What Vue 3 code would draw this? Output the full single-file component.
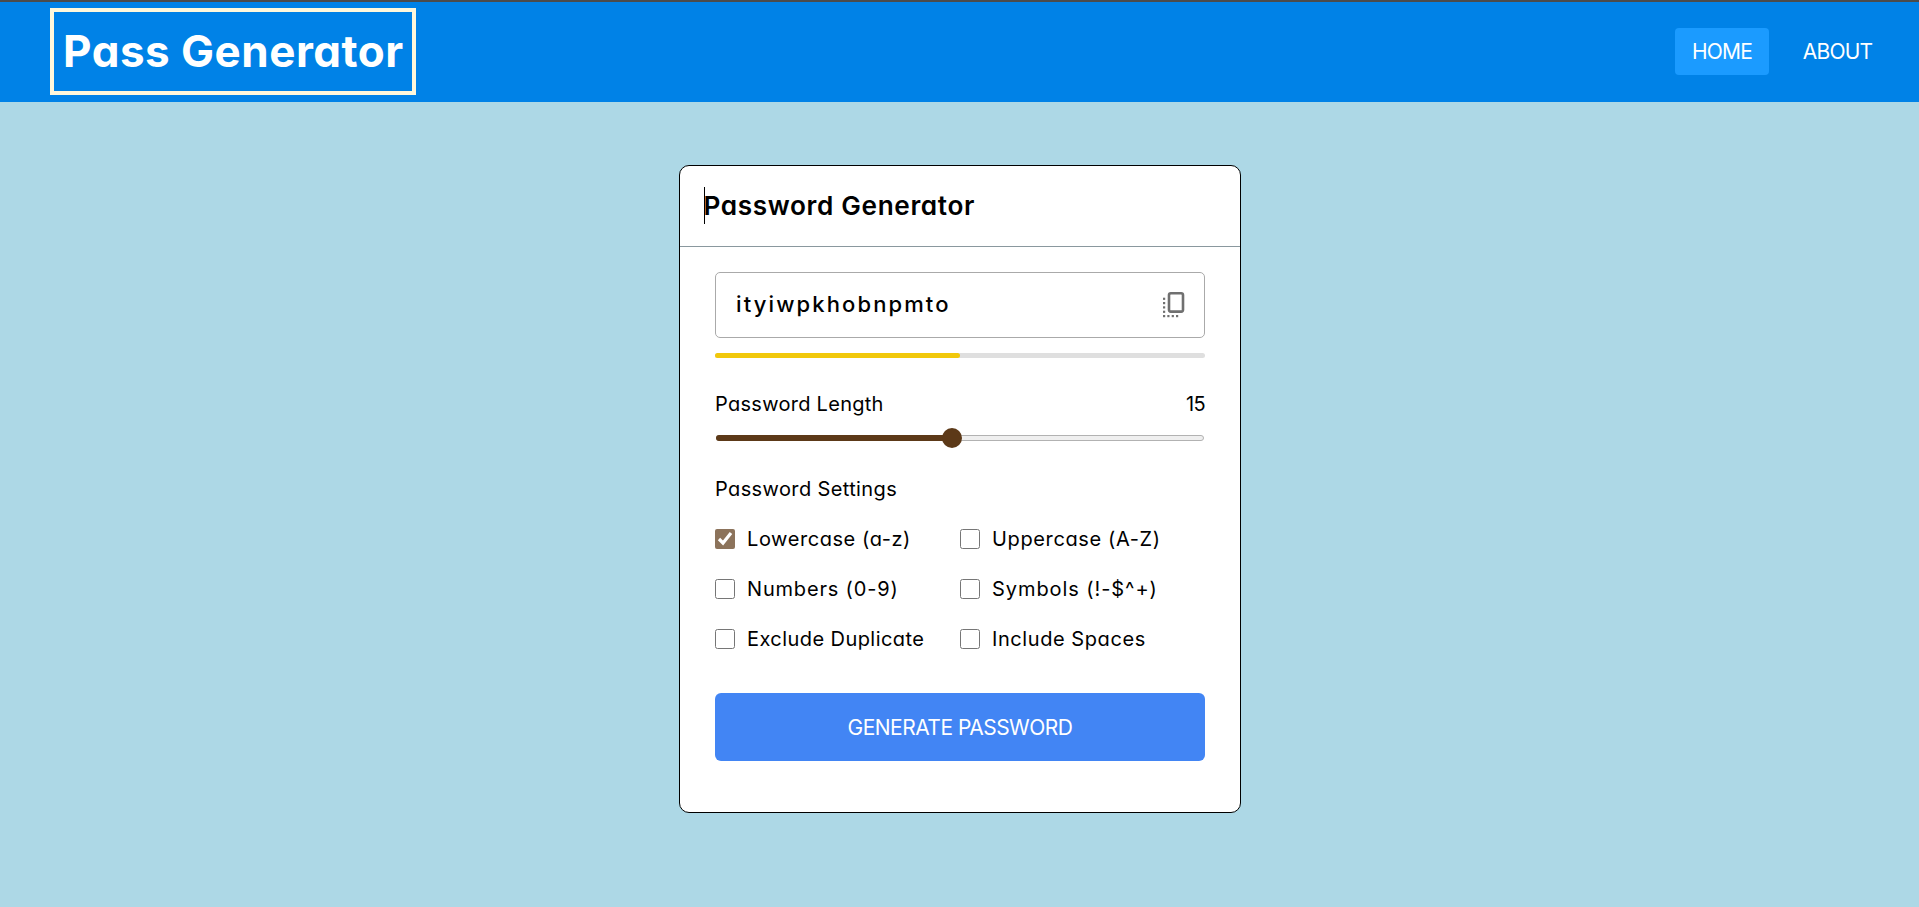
<script setup>
import { ref } from 'vue'

const password = ref('ityiwpkhobnpmto')
const length = ref(15)
const options = ref([
  { id: 'lowercase', label: 'Lowercase (a-z)', checked: true },
  { id: 'uppercase', label: 'Uppercase (A-Z)', checked: false },
  { id: 'numbers', label: 'Numbers (0-9)', checked: false },
  { id: 'symbols', label: 'Symbols (!-$^+)', checked: false },
  { id: 'duplicate', label: 'Exclude Duplicate', checked: false },
  { id: 'spaces', label: 'Include Spaces', checked: false },
])
</script>

<template>
  <div class="page">
    <header class="navbar">
      <div class="logo"><span>Pass Generator</span></div>
      <nav class="links">
        <a class="link home active">HOME</a>
        <a class="link about">ABOUT</a>
      </nav>
    </header>

    <main class="card">
      <div class="card-head">
        <i class="caret"></i>
        <h2>Password Generator</h2>
      </div>
      <div class="card-body">
        <div class="password-box">
          <span class="password">{{ password }}</span>
          <svg class="copy" viewBox="0 0 24 28" width="24" height="28">
            <rect x="7" y="2.2" width="14" height="18.4" rx="1.8" fill="none" stroke="#707070" stroke-width="2.6" />
            <g fill="#707070">
              <rect x="1" y="6.7" width="2.2" height="2.2" />
              <rect x="1" y="11" width="2.2" height="2.2" />
              <rect x="1" y="15.3" width="2.2" height="2.2" />
              <rect x="1" y="19.7" width="2.2" height="2.2" />
              <rect x="1" y="24" width="2.2" height="2.2" />
              <rect x="5.3" y="24" width="2.2" height="2.2" />
              <rect x="9.7" y="24" width="2.2" height="2.2" />
              <rect x="14" y="24" width="2.2" height="2.2" />
            </g>
          </svg>
        </div>
        <div class="strength"><div class="strength-fill"></div></div>

        <div class="row">
          <span class="length-label">Password Length</span>
          <span class="length-value">{{ length }}</span>
        </div>
        <div class="slider">
          <div class="slider-fill"></div>
          <div class="slider-thumb"></div>
        </div>

        <p class="settings-title">Password Settings</p>
        <div class="options">
          <label v-for="o in options" :key="o.id" class="option">
            <input v-model="o.checked" type="checkbox" />
            <span :class="o.id">{{ o.label }}</span>
          </label>
        </div>

        <button class="generate"><span>GENERATE PASSWORD</span></button>
      </div>
    </main>
  </div>
</template>

<style>
body {
  margin: 0;
  background: #add8e6;
}
</style>

<style scoped>
* {
  box-sizing: border-box;
}
.page {
  height: 907px;
  overflow: hidden;
  background: #add8e6;
  font-family: Inter, "Noto Sans", sans-serif;
  font-feature-settings: "cv11", "calt" 0;
  font-size: 20px;
  line-height: 30px;
  color: #000;
}
.navbar {
  display: flex;
  align-items: center;
  justify-content: space-between;
  height: 102px;
  padding: 0 29px 0 50px;
  border-top: 2px solid #4b4b4b;
  background: #0082e7;
}
.logo {
  width: 366px;
  height: 87px;
  margin-top: -1px;
  padding-left: 9px;
  border: 4px solid cornsilk;
  color: #fff;
  font-size: 44px;
  font-weight: 700;
  line-height: 79px;
  letter-spacing: 0.5px;
  white-space: nowrap;
}
.links {
  display: flex;
  gap: 16px;
  margin-top: -1px;
}
.link {
  height: 47px;
  border-radius: 4px;
  color: #fff;
  font-size: 21px;
  line-height: 47px;
  letter-spacing: -0.8px;
  text-align: center;
}
.home {
  width: 94px;
}
.about {
  width: 105px;
}
.active {
  background: #1b9bff;
}
.card {
  width: 562px;
  height: 648px;
  margin: 63px 0 0 679px;
  border: 1px solid #000;
  border-radius: 10px;
  background: #fff;
}
.card-head {
  display: flex;
  align-items: center;
  height: 81px;
  padding-left: 24px;
  border-bottom: 1px solid #8a989e;
}
.caret {
  width: 1px;
  height: 37px;
  margin-top: -1px;
  background: #000;
}
h2 {
  margin: 0 0 0 -1.5px;
  font-size: 26.2px;
  font-weight: 600;
  letter-spacing: 0.63px;
}
.card-body {
  padding: 25px 35px 0;
}
.password-box {
  display: flex;
  align-items: center;
  justify-content: space-between;
  height: 66px;
  padding: 0 18px 0 20px;
  border: 1px solid #aaa;
  border-radius: 5px;
}
.password {
  margin-top: -2px;
  font-size: 22px;
  font-weight: 500;
  letter-spacing: 2.12px;
}
.strength {
  height: 5px;
  margin-top: 15px;
  border-radius: 3px;
  background: #dfdfdf;
}
.strength-fill {
  width: 50%;
  height: 100%;
  border-radius: 3px;
  background: #f1c80b;
}
.row {
  display: flex;
  justify-content: space-between;
  margin-top: 31px;
}
.length-label {
  letter-spacing: 0.28px;
}
.length-value {
  letter-spacing: -0.7px;
}
.slider {
  position: relative;
  height: 6px;
  margin: 16px 1px 0;
  border: 1px solid #b2b2b2;
  border-radius: 3px;
  background: #efefef;
}
.slider-fill {
  width: 236px;
  height: 6px;
  margin: -1px;
  border-radius: 3px;
  background: #5c3918;
}
.slider-thumb {
  position: absolute;
  top: -8px;
  left: 225px;
  width: 20px;
  height: 20px;
  border-radius: 50%;
  background: #5c3918;
}
.settings-title {
  margin: 33px 0 0;
  letter-spacing: 0.38px;
}
.options {
  display: grid;
  grid-template-columns: 245px 245px;
  row-gap: 20px;
  margin-top: 20px;
}
.option {
  display: flex;
  align-items: center;
  height: 30px;
  white-space: nowrap;
}
.option input {
  width: 20px;
  height: 20px;
  margin: 0 12px 0 0;
  accent-color: #8c735b;
}
.lowercase {
  letter-spacing: 0.57px;
}
.uppercase {
  letter-spacing: 0.63px;
}
.numbers {
  letter-spacing: 0.82px;
}
.symbols {
  letter-spacing: 0.93px;
}
.duplicate {
  letter-spacing: 0.43px;
}
.spaces {
  letter-spacing: 0.57px;
}
.generate {
  display: block;
  width: 490px;
  height: 68px;
  margin-top: 39px;
  padding: 2px 0 0;
  border: 0;
  border-radius: 6px;
  background: #4285f4;
  color: #fff;
  font: inherit;
  font-size: 21px;
  letter-spacing: -0.52px;
}
</style>
